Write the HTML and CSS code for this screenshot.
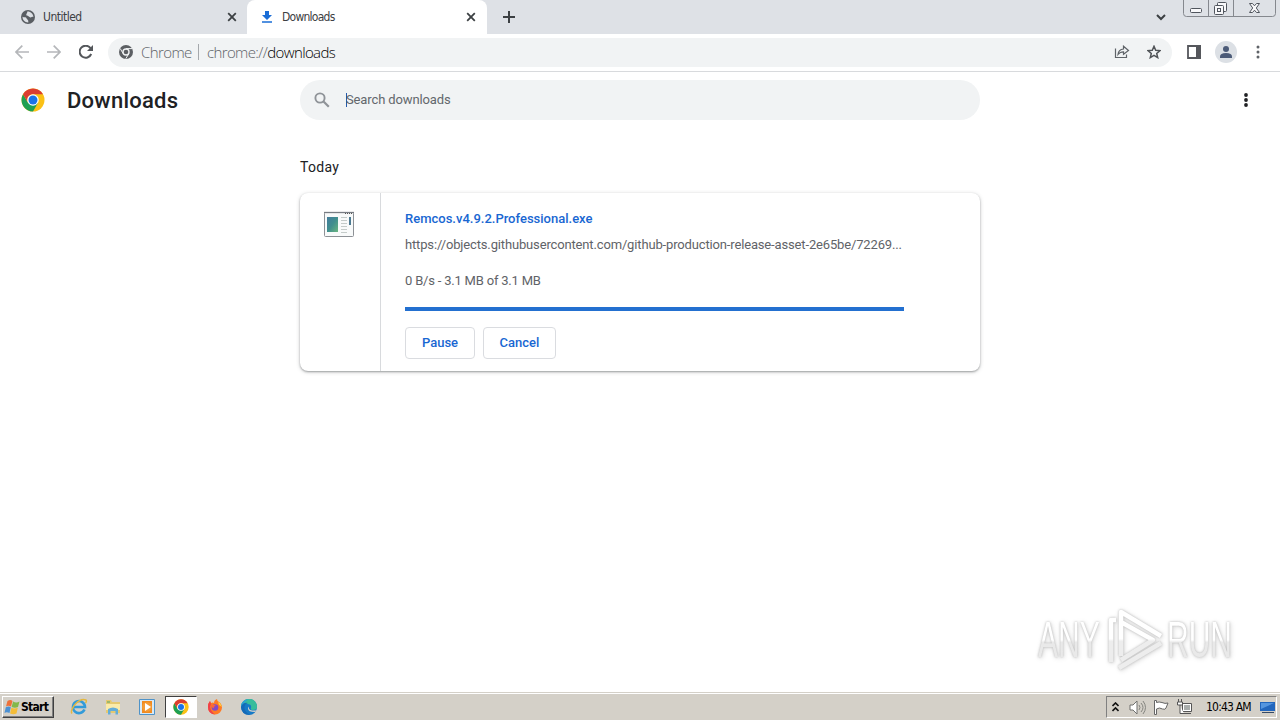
FILE: index.html
```html
<!DOCTYPE html>
<html lang="en">
<head>
<meta charset="utf-8">
<title>Downloads</title>
<link rel="stylesheet" href="styles.css">
</head>
<body>
<svg class="defs" width="0" height="0">
  <symbol id="chrome" viewBox="0 0 48 48">
    <circle cx="24" cy="24" r="23" fill="#fbc116"/>
    <path d="M4.100 12.500A23 23 0 0 0 24 47L34 29.700 24 24 14 29.700Z" fill="#1da053"/>
    <path d="M4.100 12.500A23 23 0 0 1 43.900 12.500H24A11.500 11.500 0 0 0 14 29.700Z" fill="#db3d31"/>
    <circle cx="24" cy="24" r="11.500" fill="#fff"/>
    <circle cx="24" cy="24" r="9" fill="#1a73e8"/>
  </symbol>
  <symbol id="close" viewBox="0 0 10 10"><path d="M1.200 1.200 8.800 8.800M8.800 1.200 1.200 8.800" stroke="#3c4043" stroke-width="1.800"/></symbol>
</svg>
<div class="tabs">
  <div class="tab tab-idle">
    <svg class="favicon" width="14" height="14" viewBox="0 0 14 14"><circle cx="7" cy="7" r="7" fill="#5a5e63"/><path d="M1.500 6.800C3 7.800 5 6.600 5.500 8.200S7.600 9 7.300 12.400C4 12.500 1.500 10 1.500 6.800ZM6.200 1.600C9.500 1.300 12.400 4 12.400 7 11 6.300 10.400 8 9 7.200S7.400 5.600 5.800 5.400 6.700 3 6.200 1.600Z" fill="#dee1e6"/></svg>
    <span class="tab-title">Untitled</span>
    <svg class="tab-x" width="10" height="10"><use href="#close"/></svg>
  </div>
  <div class="tab tab-active">
    <svg class="favicon" width="12" height="12" viewBox="0 0 12 12"><path d="M4 0h4v4h3L6 9 1 4h3ZM1 10.300h10v1.500H1Z" fill="#1a6dd6"/></svg>
    <span class="tab-title">Downloads</span>
    <svg class="tab-x" width="10" height="10"><use href="#close"/></svg>
  </div>
  <svg class="new-tab" width="12" height="12" viewBox="0 0 12 12"><path d="M6 0v12M0 6h12" stroke="#3c4043" stroke-width="2"/></svg>
  <svg class="tab-search" width="10" height="7" viewBox="0 0 10 7"><path d="m1 1 4 4 4-4" fill="none" stroke="#3c4043" stroke-width="2"/></svg>
  <svg class="window-buttons" width="94" height="18" viewBox="0 0 94 18"><path d="M.5 0v13.500q0 3 3 3h86q3 0 3-3V0M25.500 0v16M50.500 0v16" fill="none" stroke="#85888e"/><g fill="#f8f8fa" stroke="#50555d"><rect x="7.500" y="8.500" width="11" height="4" rx="1"/><rect x="34.500" y="2.500" width="9" height="9" rx="1"/><rect x="31.500" y="5.500" width="9" height="9" rx="1"/><rect x="34.500" y="8.500" width="3" height="3"/><path d="M66.500 3.500h3l2 2.300 2-2.300h3l-3.200 4.500 3.200 4.500h-3l-2-2.300-2 2.300h-3l3.200-4.500Z"/></g></svg>
</div>
<div class="toolbar">
  <svg class="nav" width="14" height="14" viewBox="0 0 14 14"><path d="M14 7H1M7.300.7 1 7l6.300 6.300" fill="none" stroke="#b5b7ba" stroke-width="1.700"/></svg>
  <svg class="nav" width="14" height="14" viewBox="0 0 14 14"><path d="M0 7h13M6.700.7 13 7l-6.300 6.300" fill="none" stroke="#b5b7ba" stroke-width="1.700"/></svg>
  <svg class="nav reload" width="14" height="14" viewBox="0 0 14 14"><path d="M12.200 9A6 6 0 1 1 11.500 3.200" fill="none" stroke="#54575b" stroke-width="2"/><path d="M14 0v6H8Z" fill="#54575b"/></svg>
  <div class="omnibox">
    <svg width="14" height="14" viewBox="0 0 14 14"><circle cx="7" cy="7" r="7" fill="#5c5f63"/><path d="M7 3.600h6M4.200 8.700 1.200 3.500M9.800 8.700l-3 5" stroke="#f1f3f4" stroke-width="1"/><circle cx="7" cy="7" r="3.700" fill="#f1f3f4"/><circle cx="7" cy="7" r="2.300" fill="#5c5f63"/></svg>
    <span class="scheme">Chrome</span><i class="divider"></i>
    <span class="url">chrome://<b>downloads</b></span>
    <svg class="share" width="16" height="14" viewBox="0 0 16 14"><path d="M1.500 3.500v9h11v-3M4 9.500Q4.500 4.500 9.500 4V1.200L14.500 5.500 9.500 9.300V6.800Q6 6.800 4 9.500Z" fill="none" stroke="#5f6368" stroke-width="1.200"/></svg>
    <svg class="star" width="14" height="14" viewBox="0 0 14 14"><path d="m7 1.300 1.700 3.900 4.200.4-3.200 2.800 1 4.200L7 10.400l-3.700 2.200 1-4.200L1.100 5.600l4.200-.4Z" fill="none" stroke="#505357" stroke-width="1.500"/></svg>
  </div>
  <svg class="panel" width="14" height="14" viewBox="0 0 14 14"><path d="M1 1h12v12H1Z" fill="none" stroke="#55575c" stroke-width="1.800"/><path d="M9 0h5v14H9Z" fill="#55575c"/></svg>
  <svg class="avatar" width="22" height="22" viewBox="0 0 22 22"><circle cx="11" cy="11" r="11" fill="#dce0e5"/><circle cx="11" cy="8" r="3" fill="#4c5b78"/><path d="M5 17v-1.500Q5 12 11 12t6 3.500V17Z" fill="#4c5b78"/></svg>
  <svg class="menu" width="4" height="14" viewBox="0 0 4 14"><g fill="#5f6368"><circle cx="2" cy="2" r="1.500"/><circle cx="2" cy="7" r="1.500"/><circle cx="2" cy="12" r="1.500"/></g></svg>
</div>
<main class="page">
  <header class="page-head">
    <svg class="logo" width="24" height="24"><use href="#chrome"/></svg>
    <h1>Downloads</h1>
    <div class="search">
      <svg width="16" height="16" viewBox="0 0 16 16"><circle cx="6" cy="6" r="4.600" fill="none" stroke="#8f9398" stroke-width="1.900"/><path d="m9.500 9.500 5.300 5.300" stroke="#8f9398" stroke-width="2.200"/></svg>
      <i class="caret"></i><span>Search downloads</span>
    </div>
    <svg class="more" width="4" height="14" viewBox="0 0 4 14"><g fill="#202124"><circle cx="2" cy="2" r="1.900"/><circle cx="2" cy="7" r="1.900"/><circle cx="2" cy="12" r="1.900"/></g></svg>
  </header>
  <h2>Today</h2>
  <section class="card">
    <div class="thumb">
      <svg width="32" height="27" viewBox="0 0 32 27"><defs><linearGradient id="shot" x2="1" y2="1"><stop stop-color="#427b9c"/><stop offset=".5" stop-color="#408e8e"/><stop offset="1" stop-color="#6ab680"/></linearGradient></defs><rect x="1.500" y="1.500" width="29" height="24" rx="1" fill="#f8fafa" stroke="#8d9196"/><path d="M1 1.500h30" stroke="#777c83" stroke-width="1.300"/><path d="M22 2.500h7" stroke="#555" stroke-dasharray="1 1"/><path d="M4 6h11v15H4Z" fill="url(#shot)"/><path d="M18 6.500h6M18 9.500h6M18 12.500h6M18 15.500h6M18 18.500h6M18 21.500h6" stroke="#c4cbc9"/><path d="M26 6h2v8h-2Z" fill="#4b7991"/></svg>
    </div>
    <div class="details">
      <div class="file">Remcos.v4.9.2.Professional.exe</div>
      <div class="source">https://objects.githubusercontent.com/github-production-release-asset-2e65be/72269...</div>
      <div class="status">0 B/s - 3.1 MB of 3.1 MB</div>
      <div class="progress"></div>
      <div class="actions"><button class="pause">Pause</button><button class="cancel">Cancel</button></div>
    </div>
  </section>
  <div class="watermark">
    <span class="any">ANY</span>
    <svg width="58" height="64" viewBox="0 0 58 64"><defs><linearGradient id="fade" gradientUnits="userSpaceOnUse" x1="0" y1="0" x2="0" y2="64"><stop offset=".48" stop-color="#fff"/><stop offset=".52" stop-color="#ededed"/></linearGradient></defs><g fill="none" stroke="url(#fade)" stroke-width="4.500" stroke-linejoin="round"><path d="M5 54V12h5M15 48V4l40 24M15 14l32 18L15 52M13 60l42-25"/></g></svg>
    <span class="run">RUN</span>
  </div>
</main>
<footer class="taskbar">
  <div class="start"><svg width="17" height="16" viewBox="0 0 16 16"><path d="M3 2q3-2 5 0L6.500 7.500q-3-1.500-5 0Z" fill="#ee713a"/><path d="M8.600 2.500q3 2 6.400 0L13.500 8q-3 1.500-6.400 0Z" fill="#83b84a"/><path d="M1.300 8.200q3-1.500 5 0L5 14q-3-1.500-5 0Z" fill="#4c91d3"/><path d="M6.900 8.700q3 1.500 6.400 0L12 14.500q-3 1.500-6.400 0Z" fill="#f4bd38"/></svg><span>Start</span></div>
  <div class="apps">
    <div class="app"><svg width="18" height="18" viewBox="0 0 18 18"><path d="M14.500 11.500A6 6 0 1 1 15 9H4" fill="none" stroke="#329bd9" stroke-width="2.600"/><path d="M2 15.500C-1 12 9-1 16 2q1 1-.5 3" fill="none" stroke="#e4b840" stroke-width="1.500"/></svg></div>
    <div class="app"><svg width="16" height="16" viewBox="0 0 16 16"><path d="M1 1h5l1 2h8v11H1Z" fill="#e5c970"/><path d="M1 5h14v6H1Z" fill="#faebaa"/><path d="M3 15.500V10q5-3 10 0v5.500h-2.500V12h-5v3.500Z" fill="#62add9"/><path d="M2 3h3" stroke="#57a568"/></svg></div>
    <div class="app"><svg width="16" height="16" viewBox="0 0 16 16"><path d="M.5.500h15v15H.5Z" fill="#d7e9f6" stroke="#4f93c8"/><path d="M3 2h10v12H3Z" fill="#f18b20"/><circle cx="8" cy="8" r="4.800" fill="#f49c37"/><path d="m6 4 6 4-6 4Z" fill="#fff"/></svg></div>
    <div class="app app-active"><svg width="16" height="16"><use href="#chrome"/></svg></div>
    <div class="app"><svg width="16" height="16" viewBox="0 0 16 16"><path d="M8 15.500A7 7 0 0 1 1 8Q1 4 3 2l1 2q2-1 3 0Q7 1 10 0q0 2 2 3 3 2 3 5.500a7 7 0 0 1-7 7Z" fill="#ff7a25"/><path d="M3 2l1 3-1 3q1 5 5 7.500Q1 15 1 8 1 4 3 2Z" fill="#f0404a"/><path d="M10 0q0 3 3 4l2 4-3-2Z" fill="#ffd43b"/><circle cx="8" cy="8.500" r="3.300" fill="#824bc5"/><path d="M4 6q3-1 5 1-3 0-2 2Q5 10 4 6Z" fill="#ff6638"/></svg></div>
    <div class="app"><svg width="16" height="16" viewBox="0 0 16 16"><circle cx="8" cy="8" r="8" fill="#167ac7"/><path d="M0 7.500A8 8 0 0 1 16 8q0 3-4 3-3 0-2-2 1-4-4-4Q2 5 0 8Z" fill="#37bd9c"/><path d="M0 8Q0 1 8 0 3 3 2 6Z" fill="#2a9fd8"/><path d="M0 8q2-5 7-4-5 2-3 7 2 4 6 4.700Q1 17 0 8Z" fill="#1469b7"/><path d="M8 7.500q-1.500 4.500 7.500 4L14 13Q7 13 7 9.500q0-1.500 1-2Z" fill="#d4d0c8"/></svg></div>
  </div>
  <div class="tray">
    <svg width="7" height="10" viewBox="0 0 7 10"><path d="m.5 4 3-3 3 3M.5 9l3-3 3 3" fill="none" stroke="#111" stroke-width="1.600"/></svg>
    <svg class="sound" width="17" height="15" viewBox="0 0 17 15"><path d="M1 5h3l4-4v13l-4-4H1Z" fill="#fff" stroke="#70716f"/><path d="M10 5q2 2.500 0 5M12 3q4 4.500 0 9M14 1q5 6.500 0 13" fill="none" stroke="#858580"/></svg>
    <svg class="flag" width="16" height="15" viewBox="0 0 16 15"><path d="M1.500.5v14h2V9q3-2 6 0 3 1 3.500-1l2-5q-3 1-6-.5-3-1-5.500 0v-2Z" fill="#fff" stroke="#666"/></svg>
    <svg class="net" width="16" height="16" viewBox="0 0 16 16"><path d="M5.500 4.500h9v8h-9ZM7 14.500h7" fill="#fff" stroke="#555"/><path d="M7 6h6v5H7Z" fill="#a9adac"/><path d="M1.500 0v3M4.500 0v3M.500 3h5v3h-5ZM3 6v8.500h4" fill="#fff" stroke="#555"/></svg>
    <time>10:43 AM</time>
    <svg class="desktop" width="15" height="13" viewBox="0 0 15 13"><path d="M0 1h15v9H0Z" fill="#2266bd"/><path d="M1 2h13L1 8Z" fill="#5495df"/><path d="M2 11.500h12" stroke="#344966"/></svg>
  </div>
</footer>
</body>
</html>
```
FILE: styles.css
```css
* { box-sizing: border-box; }
body { margin: 0; width: 1280px; height: 720px; display: flex; flex-direction: column; overflow: hidden; background: #fff; font-family: Roboto, sans-serif; color: #202124; }
svg { display: block; flex: none; }
.defs { position: absolute; }
span, time, .file, .source, .status { white-space: nowrap; }
.tabs { height: 34px; flex: none; display: flex; background: #dee1e6; }
.tab { display: flex; align-items: center; font: 12px/34px "DejaVu Sans Condensed", "DejaVu Sans", sans-serif; color: #3c4043; }
.tab-idle { width: 247px; padding: 0 10px 0 21px; border-radius: 0 0 8px 0; }
.tab-active { width: 240px; padding: 0 11px 0 14px; border-radius: 8px 8px 0 0; background: #fff; }
.tab-title { margin-left: 8px; letter-spacing: -.5px; }
.tab-active .tab-title { margin-left: 9px; letter-spacing: -.75px; }
.tab-x { margin-left: auto; }
.new-tab { margin: 11px 0 0 16px; }
.tab-search { margin: 14px 17px 0 auto; }
.window-buttons { margin-right: 3px; }
.toolbar { height: 38px; flex: none; display: flex; align-items: center; border-bottom: 1px solid #d8dadd; padding: 0 0 1px 15px; }
.nav { margin-right: 18px; }
.reload { margin-right: 15px; }
.omnibox { width: 1064px; height: 29px; display: flex; align-items: center; padding: 0 11px; border-radius: 15px; background: #f1f3f4; font: 300 15px "Open Sans", "Noto Sans", sans-serif; color: #5f6368; }
.scheme { width: 49px; margin-left: 8px; letter-spacing: -.6px; }
.divider { width: 1px; height: 16px; margin: 0 8px; background: #a5a8ac; }
.url { letter-spacing: -.63px; }
.url b { font-weight: 300; color: #000; }
.share { margin-left: auto; }
.star { margin-left: 17px; }
.panel { margin-left: 15px; }
.avatar { margin-left: 14px; }
.menu { margin-left: 19px; }
.page { flex: 1; min-height: 0; }
.page-head { height: 56px; display: flex; align-items: center; padding-left: 21px; }
h1 { margin: 2px 0 0 22px; width: 233px; font-size: 22px; font-weight: 500; letter-spacing: .25px; line-height: 28px; }
.search { width: 680px; height: 40px; border-radius: 20px; background: #f1f3f4; display: flex; align-items: center; padding-left: 14px; font-size: 13px; color: #63676c; letter-spacing: -.12px; }
.search span { margin: 0 0 2px -1px; }
.caret { width: 1px; height: 14px; margin-left: 16px; background: #245aac; }
.more { margin-left: 264px; }
h2 { margin: 29px 0 0 300px; font-size: 14px; line-height: 20px; font-weight: 400; letter-spacing: .3px; }
.card { margin: 16px 0 0 300px; width: 680px; height: 178px; border-radius: 8px; display: flex; box-shadow: 0 1px 2px rgba(60,64,67,.4), 0 1px 4px rgba(60,64,67,.22); }
.thumb { width: 81px; border-right: 1px solid #d8dadd; padding: 18px 0 0 23px; }
.details { width: 523px; padding: 17px 0 0 24px; font-size: 13px; color: #5f6368; }
.file { line-height: 18px; font-weight: 500; color: #1967d2; }
.source { margin-top: 8px; line-height: 18px; letter-spacing: -.15px; }
.status { margin-top: 18px; line-height: 18px; letter-spacing: -.2px; }
.progress { height: 4px; margin-top: 17px; background: #2370d0; }
.actions { display: flex; gap: 8px; margin-top: 16px; }
button { height: 32px; padding: 0 0 2px; border: 1px solid #dadce0; border-radius: 4px; background: #fff; color: #1967d2; font: 500 13px Roboto, sans-serif; }
.pause { width: 70px; }
.cancel { width: 73px; }
.watermark { width: 204px; height: 64px; margin: 237px 0 0 1038px; display: flex; align-items: center; font: 50px/58px "Liberation Sans", sans-serif; filter: drop-shadow(0 0 1px #bbb) drop-shadow(1px 1px 2px #ddd); }
.watermark span { flex: none; width: 68px; transform: scaleX(.6); transform-origin: left; color: transparent; background: linear-gradient(#fff 50%, #e9e9e9 54%); -webkit-background-clip: text; background-clip: text; }
.watermark .any, .watermark .run { width: 112px; }
.watermark .any { margin-right: -44px; }
.watermark .run { margin-left: 3px; }
.taskbar { height: 28px; flex: none; display: flex; align-items: flex-start; border-top: 1px solid #d4d0c8; box-shadow: inset 0 1px #fff; background: #d4d0c8; font-family: "DejaVu Sans Condensed", "DejaVu Sans", sans-serif; }
.start { width: 52px; height: 22px; margin: 3px 0 0 2px; padding-left: 1px; display: flex; align-items: center; border: 1px solid; border-color: #fff #404040 #404040 #fff; box-shadow: inset -1px -1px #808080; font-size: 12px; font-weight: 700; color: #000; letter-spacing: -.7px; }
.apps { display: flex; margin: 3px 0 0 9px; }
.app { width: 32px; height: 22px; margin-right: 2px; display: grid; place-items: center; }
.app-active { background: #fff; border: 1px solid; border-color: #404040 #fff #fff #404040; }
.tray { width: 171px; height: 22px; margin: 3px 3px 0 auto; padding: 0 1px 0 5px; display: flex; align-items: center; border: 1px solid; border-color: #808080 #fff #fff #808080; font-size: 12px; color: #000; }
.sound { margin-left: 10px; }
.flag { margin-left: 7px; }
.net { margin-left: 8px; }
time { margin-left: 13px; letter-spacing: -.8px; }
.desktop { margin-left: auto; }
```
